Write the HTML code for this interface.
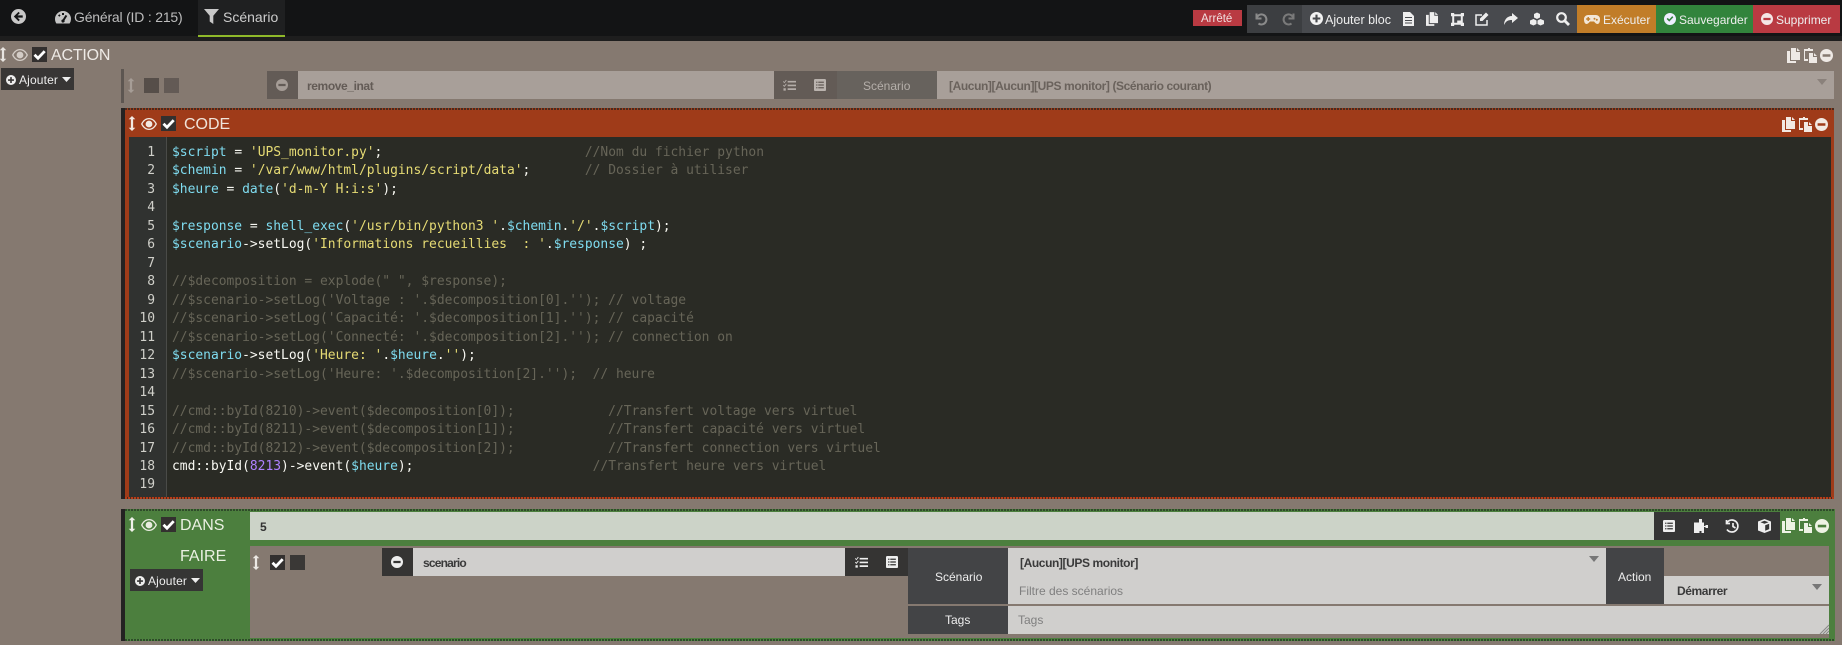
<!DOCTYPE html>
<html lang="fr"><head><meta charset="utf-8"><title>Scénario</title>
<style>
html,body{margin:0;padding:0;width:1842px;height:645px;overflow:hidden;background:#857970;font-family:"Liberation Sans",sans-serif}
.b,.t,svg{position:absolute}
.t{white-space:nowrap;line-height:16px}
svg{display:block;overflow:visible}
pre{position:absolute;left:172px;top:144px;margin:0;font:12.95px/18.47px "DejaVu Sans Mono","Liberation Mono",monospace;color:#f8f8f2;white-space:pre}
.g{position:absolute;left:129px;top:144px;width:26px;margin:0;text-align:right;font:12.95px/18.47px "DejaVu Sans Mono","Liberation Mono",monospace;color:#d0d0ca;white-space:pre}
.v{color:#7fdcf0}.s{color:#e6db74}.c{color:#676558}.n{color:#ae81ff}
.bt{font-size:12px;color:#eee}
.bd{font-size:12px;font-weight:bold;letter-spacing:-.4px}
</style></head><body>
<svg width="0" height="0" style="position:absolute">
<defs>
<symbol id="mv" viewBox="0 0 8 16"><path d="M4 0L7.500 3.500H5.200V12.500H7.500L4 16L.5 12.500H2.800V3.500H.5z" fill="currentColor"/></symbol>
<symbol id="eye" viewBox="0 0 16 12"><path fill-rule="evenodd" fill="currentColor" d="M8 0C4.500 0 1.800 2.200 0 6c1.800 3.800 4.500 6 8 6s6.200-2.200 8-6c-1.800-3.800-4.500-6-8-6zM8 1.300c2.800 0 5 1.800 6.500 4.700C13 8.900 10.800 10.700 8 10.700S3 8.900 1.500 6C3 3.100 5.200 1.300 8 1.300zM8 2.600a3.400 3.400 0 1 0 0 6.800 3.400 3.400 0 0 0 0-6.800z"/></symbol>
<symbol id="chk" viewBox="0 0 15 15"><rect width="15" height="15" fill="currentColor"/><path d="M2.500 7.700L6 11.200L12.700 4.200" fill="none" stroke="#fff" stroke-width="2.800"/></symbol>
<symbol id="min" viewBox="0 0 16 16"><path fill-rule="evenodd" fill="currentColor" d="M8 0a8 8 0 1 0 0 16A8 8 0 0 0 8 0zM3.200 6.500h9.600v3H3.200z"/></symbol>
<symbol id="plu" viewBox="0 0 16 16"><path fill-rule="evenodd" fill="currentColor" d="M8 0a8 8 0 1 0 0 16A8 8 0 0 0 8 0zM6.700 3.300h2.600v3.400h3.400v2.600H9.300v3.400H6.700V9.300H3.300V6.700h3.400z"/></symbol>
<symbol id="cpy" viewBox="0 0 13 15"><path fill="currentColor" d="M4 0h5v4h4v8H4zM10 0l3 3h-3zM0 3h3v10h6v2H0z"/></symbol>
<symbol id="pst" viewBox="0 0 13 15"><path fill="currentColor" d="M1 1h3V0h2v1h3v2H1zM0 1h1v10h3v2H0zM5 5h4v4h4v6H5zM10 5l3 3h-3z"/></symbol>
<symbol id="lst" viewBox="0 0 14 14"><path fill-rule="evenodd" fill="currentColor" d="M1.500 0h11A1.500 1.500 0 0 1 14 1.500v11a1.500 1.500 0 0 1-1.500 1.500h-11A1.500 1.500 0 0 1 0 12.500v-11A1.500 1.500 0 0 1 1.500 0zM2.500 3v1.500H4V3zM5 3v1.500h6.500V3zM2.500 6.200v1.500H4V6.200zM5 6.200v1.500h6.500V6.200zM2.500 9.500V11H4V9.500zM5 9.500V11h6.500V9.500z"/></symbol>
<symbol id="tsk" viewBox="0 0 14 14"><path fill="currentColor" d="M5 2h9v1.800H5zM5 6h9v1.800H5zM5 10h9v1.800H5zM.5 2.200l1 1L3.200.8l.8.7L1.500 4.600 0 3zM.5 6.200l1 1 1.700-2.400.8.7L1.500 8.600 0 7zM.5 10h2.500v2.500H.5z"/></symbol>
</defs></svg>

<!-- top bar -->
<div class="b" style="left:0;top:0;width:1842px;height:36px;background:#131415"></div>
<div class="b" style="left:0;top:36px;width:1842px;height:5px;background:#1e1e1e"></div>
<svg style="left:11px;top:9px;color:#c8c8c8" width="15" height="15" viewBox="0 0 16 16"><path fill-rule="evenodd" fill="currentColor" d="M8 0a8 8 0 1 0 0 16A8 8 0 0 0 8 0zM8 3l1.400 1.400L7 6.800h5.500v2.400H7l2.400 2.400L8 13 3 8z"/></svg>
<svg style="left:55px;top:10px" width="16" height="14" viewBox="0 0 16 14"><path fill-rule="evenodd" fill="#c4c4c4" d="M8 1a8 8 0 0 0-8 8c0 1.700.5 3.200 1.400 4.500h13.200A8 8 0 0 0 16 9a8 8 0 0 0-8-8zM7 3h2v2H7zM3 5.500l1.300-1.300L5.600 5.500 4.300 6.800zM10.500 5l1.800.9L9.500 10.400a1.600 1.600 0 1 1-1.700-1z"/></svg>
<span class="t" style="left:74px;top:9px;font-size:14px;letter-spacing:-.2px;color:#bdbdbd">Général (ID : 215)</span>
<div class="b" style="left:198px;top:0;width:87px;height:36px;background:#1f2021"></div>
<div class="b" style="left:198px;top:35px;width:87px;height:2px;background:#8fb92a"></div>
<svg style="left:204px;top:9px" width="15" height="15" viewBox="0 0 15 15"><path fill="#c8c8c8" d="M0 0h15L9.300 6.800V15L5.700 12.500V6.800z"/></svg>
<span class="t" style="left:223px;top:9px;font-size:14px;color:#cdcdcd">Scénario</span>

<div class="b" style="left:1193px;top:10px;width:49px;height:16px;background:#b93a42"></div>
<span class="t" style="left:1201px;top:11px;font-size:11.500px;color:#f0e0e0">Arrêté</span>
<div class="b" style="left:1247px;top:5px;width:55px;height:28px;background:#3c3e41"></div>
<div class="b" style="left:1302px;top:5px;width:275px;height:28px;background:#484a4e"></div>
<svg style="left:1254px;top:12px" width="14" height="14" viewBox="0 0 14 14"><path d="M2.500 6.500a5 5 0 1 1 2 5M2.500 1.500v5h5" fill="none" stroke="#8a8a8a" stroke-width="2"/></svg>
<svg style="left:1282px;top:12px" width="14" height="14" viewBox="0 0 14 14"><path d="M11.500 6.500a5 5 0 1 0-2 5M11.500 1.500v5h-5" fill="none" stroke="#7a7a7a" stroke-width="2"/></svg>
<svg style="left:1310px;top:12px;color:#f2f2f2" width="13" height="13"><use href="#plu"/></svg>
<span class="t bt" style="left:1325px;top:12px;font-size:12.500px">Ajouter bloc</span>
<svg style="left:1403px;top:12px" width="11" height="14" viewBox="0 0 11 14"><path fill-rule="evenodd" fill="#eee" d="M0 0h7l4 4v10H0zM2 5v1h7V5zM2 8v1h7V8zM2 10.500v1h7v-1z"/></svg>
<svg style="left:1426px;top:12px;color:#eee" width="12" height="14"><use href="#cpy"/></svg>
<svg style="left:1451px;top:13px" width="13" height="13" viewBox="0 0 13 13"><path fill="#eee" d="M0 0h3.200v1.200h6.600V0H13v3.200h-1.200v6.600H13V13H9.800v-1.200H3.200V13H0V9.800h1.200V3.200H0zM3.200 3.200v6.600h3V7.500H9.800V3.200z"/></svg>
<svg style="left:1475px;top:12px" width="14" height="14" viewBox="0 0 14 14"><path d="M12 8v5H1V3h6" fill="none" stroke="#eee" stroke-width="1.500"/><path d="M5 6.500L11 .5l2.500 2.500-6 6H5z" fill="#eee"/></svg>
<svg style="left:1504px;top:13px" width="14" height="12" viewBox="0 0 14 12"><path d="M8 0l6 5-6 5V7C4 7 2 8 0 12 0 7 3 3 8 3z" fill="#eee"/></svg>
<svg style="left:1530px;top:12px" width="14" height="14" viewBox="0 0 14 13"><path fill="#eee" d="M7 0l3 1.500V5L7 6.500 4 5V1.500zM3.500 6.500l3 1.500v3.500L3.500 13 0 11.500V8zM10.500 6.500L14 8v3.500L10.500 13l-3-1.500V8z"/></svg>
<svg style="left:1556px;top:12px" width="14" height="14" viewBox="0 0 14 14"><circle cx="5.500" cy="5.500" r="4.300" fill="none" stroke="#eee" stroke-width="2.200"/><path d="M8.500 8.500L13 13" stroke="#eee" stroke-width="2.800"/></svg>
<div class="b" style="left:1577px;top:5px;width:79px;height:28px;background:#c17d28"></div>
<svg style="left:1584px;top:15px" width="16" height="9" viewBox="0 0 16 9"><path fill-rule="evenodd" d="M4 0h8a4 4 0 0 1 4 4.500C16 7 15 9 13.500 9S11 7.500 10 6.500H6C5 7.500 4 9 2.500 9S0 7 0 4.500A4 4 0 0 1 4 0zM3.500 2v1.300H2.200v1.400h1.300V6h1.400V4.700h1.300V3.300H4.900V2zM10.500 2.800a1 1 0 1 0 0 2 1 1 0 0 0 0-2zM12.800 3.800a1 1 0 1 0 0 2 1 1 0 0 0 0-2z" fill="#f2e6d6"/></svg>
<span class="t bt" style="left:1603px;top:12px">Exécuter</span>
<div class="b" style="left:1656px;top:5px;width:97px;height:28px;background:#32843c"></div>
<svg style="left:1664px;top:13px" width="12" height="12" viewBox="0 0 16 16"><path fill-rule="evenodd" fill="#eef" d="M8 0a8 8 0 1 0 0 16A8 8 0 0 0 8 0zM3.500 8L5 6.500l2 2 4-4.300L12.500 5.700 7 11.500z"/></svg>
<span class="t bt" style="left:1679px;top:12px">Sauvegarder</span>
<div class="b" style="left:1753px;top:5px;width:87px;height:28px;background:#b93a42"></div>
<svg style="left:1761px;top:13px;color:#f4e6e6" width="12" height="12"><use href="#min"/></svg>
<span class="t bt" style="left:1776px;top:12px">Supprimer</span>

<!-- ACTION header -->
<svg style="left:-1px;top:47px;color:#e8e4e0" width="8" height="15"><use href="#mv"/></svg>
<svg style="left:12px;top:49px;color:#d3ccc6" width="16" height="12"><use href="#eye"/></svg>
<svg style="left:32px;top:47px;color:#33302f" width="15" height="15"><use href="#chk"/></svg>
<span class="t" style="left:51px;top:48px;font-size:16px;letter-spacing:-.2px;color:#eeeae6">ACTION</span>
<svg style="left:1787px;top:48px;color:#eee9e5" width="13" height="15"><use href="#cpy"/></svg>
<svg style="left:1804px;top:48px;color:#eee9e5" width="13" height="15"><use href="#pst"/></svg>
<svg style="left:1820px;top:49px;color:#eee9e5" width="13" height="13"><use href="#min"/></svg>
<div class="b" style="left:1px;top:68px;width:73px;height:22px;background:#383635"></div>
<svg style="left:6px;top:75px;color:#eee" width="10" height="10"><use href="#plu"/></svg>
<span class="t" style="left:19px;top:72px;font-size:12px;letter-spacing:.15px;color:#eee">Ajouter</span>
<svg style="left:62px;top:77px" width="9" height="5"><path d="M0 0h9L4.500 5z" fill="#eee"/></svg>

<!-- disabled line -->
<div class="b" style="left:121px;top:69px;width:3px;height:34px;background:#5d5651"></div>
<svg style="left:127px;top:78px;color:#a69d96" width="8" height="15"><use href="#mv"/></svg>
<div class="b" style="left:144px;top:78px;width:15px;height:15px;background:#564e49"></div>
<div class="b" style="left:164px;top:78px;width:15px;height:15px;background:#635a55"></div>
<div class="b" style="left:267px;top:71px;width:31px;height:28px;background:#635b56"></div>
<svg style="left:276px;top:79px;color:#a59c96" width="12" height="12"><use href="#min"/></svg>
<div class="b" style="left:298px;top:71px;width:476px;height:28px;background:#a89f99"></div>
<span class="t bd" style="left:307px;top:78px;color:#635b56">remove_inat</span>
<div class="b" style="left:774px;top:71px;width:63px;height:28px;background:#635b56"></div>
<svg style="left:783px;top:79px;color:#b4ada8" width="13" height="13"><use href="#tsk"/></svg>
<svg style="left:814px;top:79px;color:#bab3ae" width="12" height="12"><use href="#lst"/></svg>
<div class="b" style="left:837px;top:71px;width:100px;height:28px;background:#67625d"></div>
<span class="t" style="left:863px;top:78px;font-size:12px;color:#b5afaa">Scénario</span>
<div class="b" style="left:937px;top:71px;width:897px;height:28px;background:#a89f99"></div>
<span class="t bd" style="left:949px;top:78px;color:#6a625c">[Aucun][Aucun][UPS monitor] (Scénario courant)</span>
<svg style="left:1817px;top:79px" width="10" height="6"><path d="M0 0h10L5 6z" fill="#8a817b"/></svg>

<!-- CODE block -->
<div class="b" style="left:121px;top:108px;width:4px;height:391px;background:#242222"></div>
<div class="b" style="left:125px;top:109px;width:1709px;height:390px;background:#9f3b19"></div>
<div class="b" style="left:125px;top:108px;width:1709px;height:2px;background:repeating-linear-gradient(90deg,#4a2a1c 0 2px,#9f3b19 2px 3px)"></div>
<div class="b" style="left:125px;top:497px;width:1709px;height:2px;background:repeating-linear-gradient(90deg,#b93c17 0 2px,#4a2a1c 2px 3px)"></div>
<svg style="left:128px;top:116px;color:#f2e9e2" width="8" height="15"><use href="#mv"/></svg>
<svg style="left:141px;top:118px;color:#f2e9e2" width="16" height="12"><use href="#eye"/></svg>
<svg style="left:161px;top:116px;color:#33302f" width="15" height="15"><use href="#chk"/></svg>
<span class="t" style="left:184px;top:117px;font-size:16px;color:#f0e4da">CODE</span>
<svg style="left:1782px;top:117px;color:#f2e9e2" width="13" height="15"><use href="#cpy"/></svg>
<svg style="left:1799px;top:117px;color:#f2e9e2" width="13" height="15"><use href="#pst"/></svg>
<svg style="left:1815px;top:118px;color:#f2e9e2" width="13" height="13"><use href="#min"/></svg>
<div class="b" style="left:129px;top:137px;width:1702px;height:360px;background:#2a2b25"></div>
<div class="b" style="left:129px;top:137px;width:38px;height:360px;background:#303230;border-right:1px solid #4a4b48;box-sizing:border-box"></div>
<pre class="g">1
2
3
4
5
6
7
8
9
10
11
12
13
14
15
16
17
18
19</pre>
<pre><span class="v">$script</span> = <span class="s">'UPS_monitor.py'</span>;                          <span class="c">//Nom du fichier python</span>
<span class="v">$chemin</span> = <span class="s">'/var/www/html/plugins/script/data'</span>;       <span class="c">// Dossier à utiliser</span>
<span class="v">$heure</span> = <span class="v">date</span>(<span class="s">'d-m-Y H:i:s'</span>);

<span class="v">$response</span> = <span class="v">shell_exec</span>(<span class="s">'/usr/bin/python3 '</span>.<span class="v">$chemin</span>.<span class="s">'/'</span>.<span class="v">$script</span>);
<span class="v">$scenario</span>-&gt;setLog(<span class="s">'Informations recueillies  : '</span>.<span class="v">$response</span>) ;

<span class="c">//$decomposition = explode(" ", $response);
//$scenario-&gt;setLog('Voltage : '.$decomposition[0].''); // voltage
//$scenario-&gt;setLog('Capacité: '.$decomposition[1].''); // capacité
//$scenario-&gt;setLog('Connecté: '.$decomposition[2].''); // connection on</span>
<span class="v">$scenario</span>-&gt;setLog(<span class="s">'Heure: '</span>.<span class="v">$heure</span>.<span class="s">''</span>);
<span class="c">//$scenario-&gt;setLog('Heure: '.$decomposition[2].'');  // heure

//cmd::byId(8210)-&gt;event($decomposition[0]);            //Transfert voltage vers virtuel
//cmd::byId(8211)-&gt;event($decomposition[1]);            //Transfert capacité vers virtuel
//cmd::byId(8212)-&gt;event($decomposition[2]);            //Transfert connection vers virtuel</span>
cmd::byId(<span class="n">8213</span>)-&gt;event(<span class="v">$heure</span>);                       <span class="c">//Transfert heure vers virtuel</span>
</pre>

<!-- DANS block -->
<div class="b" style="left:121px;top:509px;width:4px;height:132px;background:#242222"></div>
<div class="b" style="left:125px;top:510px;width:1710px;height:131px;background:#4c7f3e"></div>
<div class="b" style="left:125px;top:509px;width:1710px;height:2px;background:repeating-linear-gradient(90deg,#2f4a2a 0 2px,#4c7f3e 2px 3px)"></div>
<div class="b" style="left:125px;top:639px;width:1710px;height:2px;background:repeating-linear-gradient(90deg,#2f4a2a 0 2px,#4c8a3e 2px 3px)"></div>
<div class="b" style="left:250px;top:546px;width:1579px;height:92px;background:#857970"></div>
<div class="b" style="left:250px;top:512px;width:1404px;height:28px;background:#ccd3c8"></div>
<svg style="left:128px;top:517px;color:#f0f2ea" width="8" height="15"><use href="#mv"/></svg>
<svg style="left:141px;top:519px;color:#e8ecdf" width="16" height="12"><use href="#eye"/></svg>
<svg style="left:161px;top:517px;color:#33302f" width="15" height="15"><use href="#chk"/></svg>
<span class="t" style="left:180px;top:518px;font-size:16px;color:#eaf0e2">DANS</span>
<span class="t" style="left:260px;top:519px;font-size:12px;font-weight:bold;color:#333">5</span>
<div class="b" style="left:1654px;top:512px;width:126px;height:28px;background:#353535"></div>
<svg style="left:1663px;top:520px;color:#eee" width="12" height="12"><use href="#lst"/></svg>
<svg style="left:1694px;top:519px" width="14" height="14" viewBox="0 0 14 14"><path fill="#eee" d="M5 0h3v2.500h0V3.500H10V7h1.500v-1h2.500v3h-2.500V8H10v6H7.500v-2h-2v2H0V3.500h5z"/></svg>
<svg style="left:1726px;top:519px" width="14" height="14" viewBox="0 0 14 14"><path d="M1 3.500a6 6 0 1 1 0 7M.5 1v3.500H4M7 4v3.500l2.500 1.500" fill="none" stroke="#eee" stroke-width="1.700"/></svg>
<svg style="left:1758px;top:519px" width="13" height="14" viewBox="0 0 13 14"><path fill-rule="evenodd" fill="#eee" d="M6.500 0L13 2.500v9L6.500 14 0 11.500v-9zM2.500 3.200l4 1.600 4-1.600-4-1.500zM7.200 6.200v5.500l4-1.600V4.700z"/></svg>
<svg style="left:1782px;top:518px;color:#eef3e4" width="13" height="15"><use href="#cpy"/></svg>
<svg style="left:1799px;top:518px;color:#eef3e4" width="13" height="15"><use href="#pst"/></svg>
<svg style="left:1815px;top:519px;color:#eef3e4" width="14" height="14"><use href="#min"/></svg>
<span class="t" style="left:180px;top:549px;font-size:16px;color:#eaf0e2">FAIRE</span>
<div class="b" style="left:130px;top:569px;width:73px;height:22px;background:#353534"></div>
<svg style="left:135px;top:576px;color:#eee" width="10" height="10"><use href="#plu"/></svg>
<span class="t" style="left:148px;top:573px;font-size:12px;letter-spacing:.15px;color:#eee">Ajouter</span>
<svg style="left:191px;top:578px" width="9" height="5"><path d="M0 0h9L4.500 5z" fill="#eee"/></svg>

<svg style="left:252px;top:555px;color:#ece8e4" width="8" height="15"><use href="#mv"/></svg>
<svg style="left:270px;top:555px;color:#33302f" width="15" height="15"><use href="#chk"/></svg>
<div class="b" style="left:290px;top:555px;width:15px;height:15px;background:#3a3836"></div>
<div class="b" style="left:382px;top:548px;width:31px;height:28px;background:#353433"></div>
<svg style="left:391px;top:556px;color:#eee" width="12" height="12"><use href="#min"/></svg>
<div class="b" style="left:413px;top:548px;width:432px;height:28px;background:#d0cfcd"></div>
<span class="t bd" style="left:423px;top:555px;letter-spacing:-.8px;color:#3a3a3a">scenario</span>
<div class="b" style="left:845px;top:548px;width:63px;height:28px;background:#353433"></div>
<svg style="left:855px;top:556px;color:#eee" width="13" height="13"><use href="#tsk"/></svg>
<svg style="left:886px;top:556px;color:#eee" width="12" height="12"><use href="#lst"/></svg>
<div class="b" style="left:908px;top:548px;width:100px;height:56px;background:#434446"></div>
<span class="t" style="left:935px;top:569px;font-size:12px;color:#eee">Scénario</span>
<div class="b" style="left:1008px;top:548px;width:598px;height:56px;background:#d0cfcd"></div>
<span class="t bd" style="left:1020px;top:555px;color:#3a3a3a">[Aucun][UPS monitor]</span>
<span class="t" style="left:1019px;top:583px;font-size:12px;color:#7f7f7f">Filtre des scénarios</span>
<svg style="left:1589px;top:556px" width="10" height="6"><path d="M0 0h10L5 6z" fill="#777"/></svg>
<div class="b" style="left:1606px;top:548px;width:58px;height:56px;background:#434446"></div>
<span class="t" style="left:1618px;top:569px;font-size:12px;color:#eee">Action</span>
<div class="b" style="left:1664px;top:576px;width:165px;height:28px;background:#d0cfcd"></div>
<span class="t bd" style="left:1677px;top:583px;color:#3a3a3a">Démarrer</span>
<svg style="left:1812px;top:584px" width="10" height="6"><path d="M0 0h10L5 6z" fill="#777"/></svg>
<div class="b" style="left:908px;top:606px;width:100px;height:28px;background:#434446"></div>
<span class="t" style="left:945px;top:612px;font-size:12px;color:#eee">Tags</span>
<div class="b" style="left:1008px;top:606px;width:821px;height:28px;background:#d0cfcd"></div>
<span class="t" style="left:1018px;top:612px;font-size:12px;color:#7f7f7f">Tags</span>
<svg style="left:1820px;top:625px" width="9" height="9"><path d="M9 0L0 9M9 3L3 9M9 6L6 9" stroke="#888" stroke-width="1"/></svg>
</body></html>
